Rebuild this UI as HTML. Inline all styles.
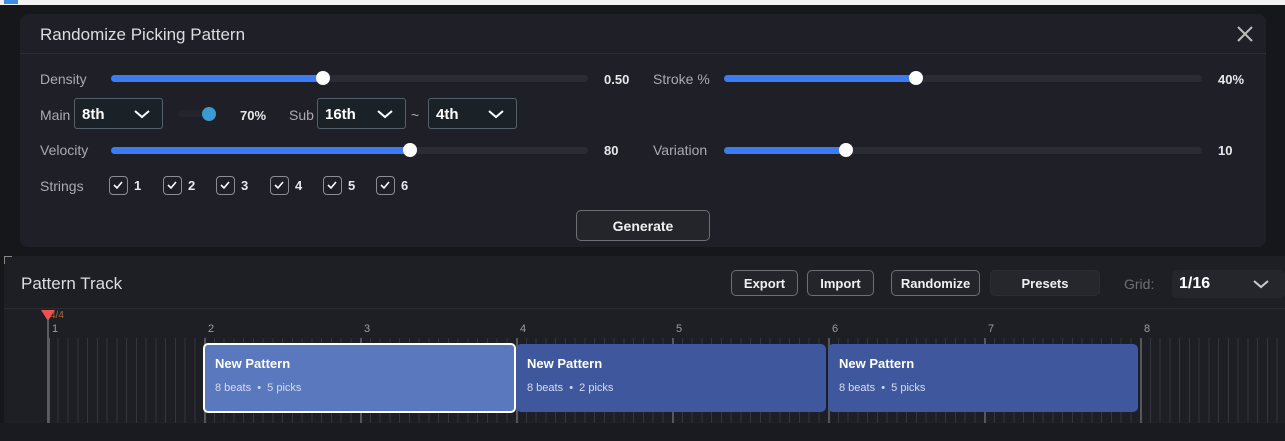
<!DOCTYPE html><html><head><style>
*{margin:0;padding:0;box-sizing:border-box}
body{width:1285px;height:441px;background:#16171b;font-family:"Liberation Sans",sans-serif;position:relative;overflow:hidden;color:#ddd}
.a{position:absolute}
.lbl{font-size:14px;color:#a9abb2}
.val{font-size:13px;color:#e8e8ea;font-weight:bold}
.track{height:7px;border-radius:4px;background:#2a2c33}
.fill{height:7px;border-radius:4px;background:#3f7bf0;position:absolute;left:0;top:0}
.knob{width:14px;height:14px;border-radius:50%;background:#fff;position:absolute;top:-4px}
.sel{border:1px solid #55606a;background:#1b2227;border-radius:3px;height:31px;font-size:15px;color:#fff;font-weight:bold;padding:7px 0 0 7px}
.sel svg{position:absolute;right:12px;top:11px}
.cb{width:19px;height:19px;border:1.5px solid #8a8d94;border-radius:4px}
.btn{border:1.5px solid #6c6f76;border-radius:5px;background:#23252b;color:#f0f0f0;font-size:13px;font-weight:bold;text-align:center}
.clip{border-radius:5px;color:#fff}
.clip b{position:absolute;left:11px;top:12px;font-size:13px}
.clip span{position:absolute;left:11px;top:38px;font-size:11px;color:#d6dcee}
.num{font-size:11px;color:#9a9ca2}
</style></head><body>
<div class="a" style="left:0;top:0;width:1285px;height:5px;background:#f2f2f2"></div>
<div class="a" style="left:4px;top:0;width:14px;height:4px;background:#3b8ee0"></div>
<div class="a" style="left:20px;top:14px;width:1246px;height:233px;background:#1f2027;border-radius:8px"></div>
<div class="a" style="left:20px;top:53px;width:1246px;height:1px;background:#2c2e35"></div>
<div class="a" style="left:40px;top:25px;font-size:17px;color:#dcdde0">Randomize Picking Pattern</div>
<svg class="a" style="left:1237px;top:26px" width="16" height="16"><path d="M1 1L15 15M15 1L1 15" stroke="#bbb" stroke-width="2"/></svg>

<div class="a lbl" style="left:40px;top:71px">Density</div>
<div class="a track" style="left:111px;top:75px;width:477px"><div class="fill" style="width:213px"></div><div class="knob" style="left:205px"></div></div>
<div class="a val" style="left:604px;top:72px">0.50</div>
<div class="a lbl" style="left:653px;top:71px">Stroke %</div>
<div class="a track" style="left:724px;top:75px;width:478px"><div class="fill" style="width:193px"></div><div class="knob" style="left:185px"></div></div>
<div class="a val" style="left:1218px;top:72px">40%</div>

<div class="a lbl" style="left:40px;top:107px">Main</div>
<div class="a sel" style="left:74px;top:98px;width:89px">8th<svg width="16" height="9"><path d="M1 1L8 7L15 1" stroke="#fff" stroke-width="2" fill="none"/></svg></div>
<div class="a" style="left:178px;top:110px;width:38px;height:7px;border-radius:4px;background:#22252b"></div>
<div class="a" style="left:202px;top:107px;width:14px;height:14px;border-radius:50%;background:#3a9bd0"></div>
<div class="a val" style="left:240px;top:108px">70%</div>
<div class="a lbl" style="left:289px;top:107px">Sub</div>
<div class="a sel" style="left:317px;top:98px;width:89px">16th<svg width="16" height="9"><path d="M1 1L8 7L15 1" stroke="#fff" stroke-width="2" fill="none"/></svg></div>
<div class="a lbl" style="left:411px;top:107px">~</div>
<div class="a sel" style="left:428px;top:98px;width:89px">4th<svg width="16" height="9"><path d="M1 1L8 7L15 1" stroke="#fff" stroke-width="2" fill="none"/></svg></div>

<div class="a lbl" style="left:40px;top:142px">Velocity</div>
<div class="a track" style="left:111px;top:147px;width:477px"><div class="fill" style="width:300px"></div><div class="knob" style="left:292px"></div></div>
<div class="a val" style="left:604px;top:143px">80</div>
<div class="a lbl" style="left:653px;top:142px">Variation</div>
<div class="a track" style="left:724px;top:147px;width:478px"><div class="fill" style="width:123px"></div><div class="knob" style="left:115px"></div></div>
<div class="a val" style="left:1218px;top:143px">10</div>

<div class="a lbl" style="left:40px;top:178px">Strings</div>
<div class="a" style="left:109px;top:176px">
<div class="a cb" style="left:0"><svg width="16" height="16"><path d="M4 8L7 11L12 5" stroke="#fff" stroke-width="1.6" fill="none"/></svg></div><div class="a val" style="left:25px;top:2px">1</div>
<div class="a cb" style="left:54px"><svg width="16" height="16"><path d="M4 8L7 11L12 5" stroke="#fff" stroke-width="1.6" fill="none"/></svg></div><div class="a val" style="left:79px;top:2px">2</div>
<div class="a cb" style="left:107px"><svg width="16" height="16"><path d="M4 8L7 11L12 5" stroke="#fff" stroke-width="1.6" fill="none"/></svg></div><div class="a val" style="left:132px;top:2px">3</div>
<div class="a cb" style="left:161px"><svg width="16" height="16"><path d="M4 8L7 11L12 5" stroke="#fff" stroke-width="1.6" fill="none"/></svg></div><div class="a val" style="left:186px;top:2px">4</div>
<div class="a cb" style="left:214px"><svg width="16" height="16"><path d="M4 8L7 11L12 5" stroke="#fff" stroke-width="1.6" fill="none"/></svg></div><div class="a val" style="left:239px;top:2px">5</div>
<div class="a cb" style="left:267px"><svg width="16" height="16"><path d="M4 8L7 11L12 5" stroke="#fff" stroke-width="1.6" fill="none"/></svg></div><div class="a val" style="left:292px;top:2px">6</div>
</div>
<div class="a btn" style="left:576px;top:210px;width:134px;height:31px;padding-top:7px;font-size:14px">Generate</div>

<div class="a" style="left:4px;top:256px;width:1281px;height:167px;background:#1e1f25"></div>
<div class="a" style="left:4px;top:256px;width:8px;height:1px;background:#888"></div>
<div class="a" style="left:4px;top:256px;width:1px;height:8px;background:#888"></div>
<div class="a" style="left:21px;top:274px;font-size:17px;color:#dcdde0">Pattern Track</div>
<div class="a btn" style="left:731px;top:270px;width:67px;height:26px;padding-top:5px">Export</div>
<div class="a btn" style="left:807px;top:270px;width:67px;height:26px;padding-top:5px">Import</div>
<div class="a btn" style="left:891px;top:270px;width:89px;height:26px;padding-top:5px">Randomize</div>
<div class="a btn" style="left:990px;top:270px;width:110px;height:26px;padding-top:5px;border-color:#2b2d33;background:#25272d">Presets</div>
<div class="a lbl" style="left:1124px;top:276px;color:#6e7076">Grid:</div>
<div class="a" style="left:1172px;top:270px;width:113px;height:28px;background:#24262c;border-radius:5px;font-size:16px;font-weight:bold;color:#fff;padding:5px 0 0 7px">1/16<svg class="a" style="left:81px;top:10px" width="16" height="9"><path d="M1 1L8 7L15 1" stroke="#ccc" stroke-width="2" fill="none"/></svg></div>
<div class="a" style="left:4px;top:308px;width:1281px;height:1px;background:#2b2d33"></div>

<div class="a" style="left:48px;top:338px;width:1237px;height:85px;background:repeating-linear-gradient(90deg,#34363c 0,#34363c 1px,transparent 1px,transparent 9.75px)"></div>
<div class="a" style="left:48px;top:338px;width:1237px;height:85px;background:repeating-linear-gradient(90deg,#55575e 0,#55575e 2px,transparent 2px,transparent 156px)"></div>
<svg class="a" style="left:41px;top:310px" width="14" height="11"><path d="M0 0H14L7 11Z" fill="#f05050"/></svg>
<div class="a" style="left:50px;top:310px;font-size:10px;color:#b06a30">4/4</div>
<div class="a num" style="left:52px;top:323px">1</div><div class="a num" style="left:208px;top:323px">2</div><div class="a num" style="left:364px;top:323px">3</div><div class="a num" style="left:520px;top:323px">4</div><div class="a num" style="left:676px;top:323px">5</div><div class="a num" style="left:832px;top:323px">6</div><div class="a num" style="left:988px;top:323px">7</div><div class="a num" style="left:1144px;top:323px">8</div>
<div class="a" style="left:4px;top:338px;width:44px;height:85px;background:#1e1f25"></div>
<div class="a" style="left:47px;top:320px;width:2px;height:103px;background:#5a5c63"></div>

<div class="a clip" style="left:203px;top:343px;width:313px;height:70px;background:#5a78bd;border:2px solid #fff"><b style="left:10px;top:11px">New Pattern</b><span style="left:10px;top:37px">8 beats &nbsp;•&nbsp; 5 picks</span></div>
<div class="a clip" style="left:516px;top:344px;width:310px;height:68px;background:#3f589d"><b>New Pattern</b><span>8 beats &nbsp;•&nbsp; 2 picks</span></div>
<div class="a clip" style="left:828px;top:344px;width:310px;height:68px;background:#3f589d"><b>New Pattern</b><span>8 beats &nbsp;•&nbsp; 5 picks</span></div>
<div class="a" style="left:0;top:423px;width:1285px;height:18px;background:#1a1b20"></div>
</body></html>
